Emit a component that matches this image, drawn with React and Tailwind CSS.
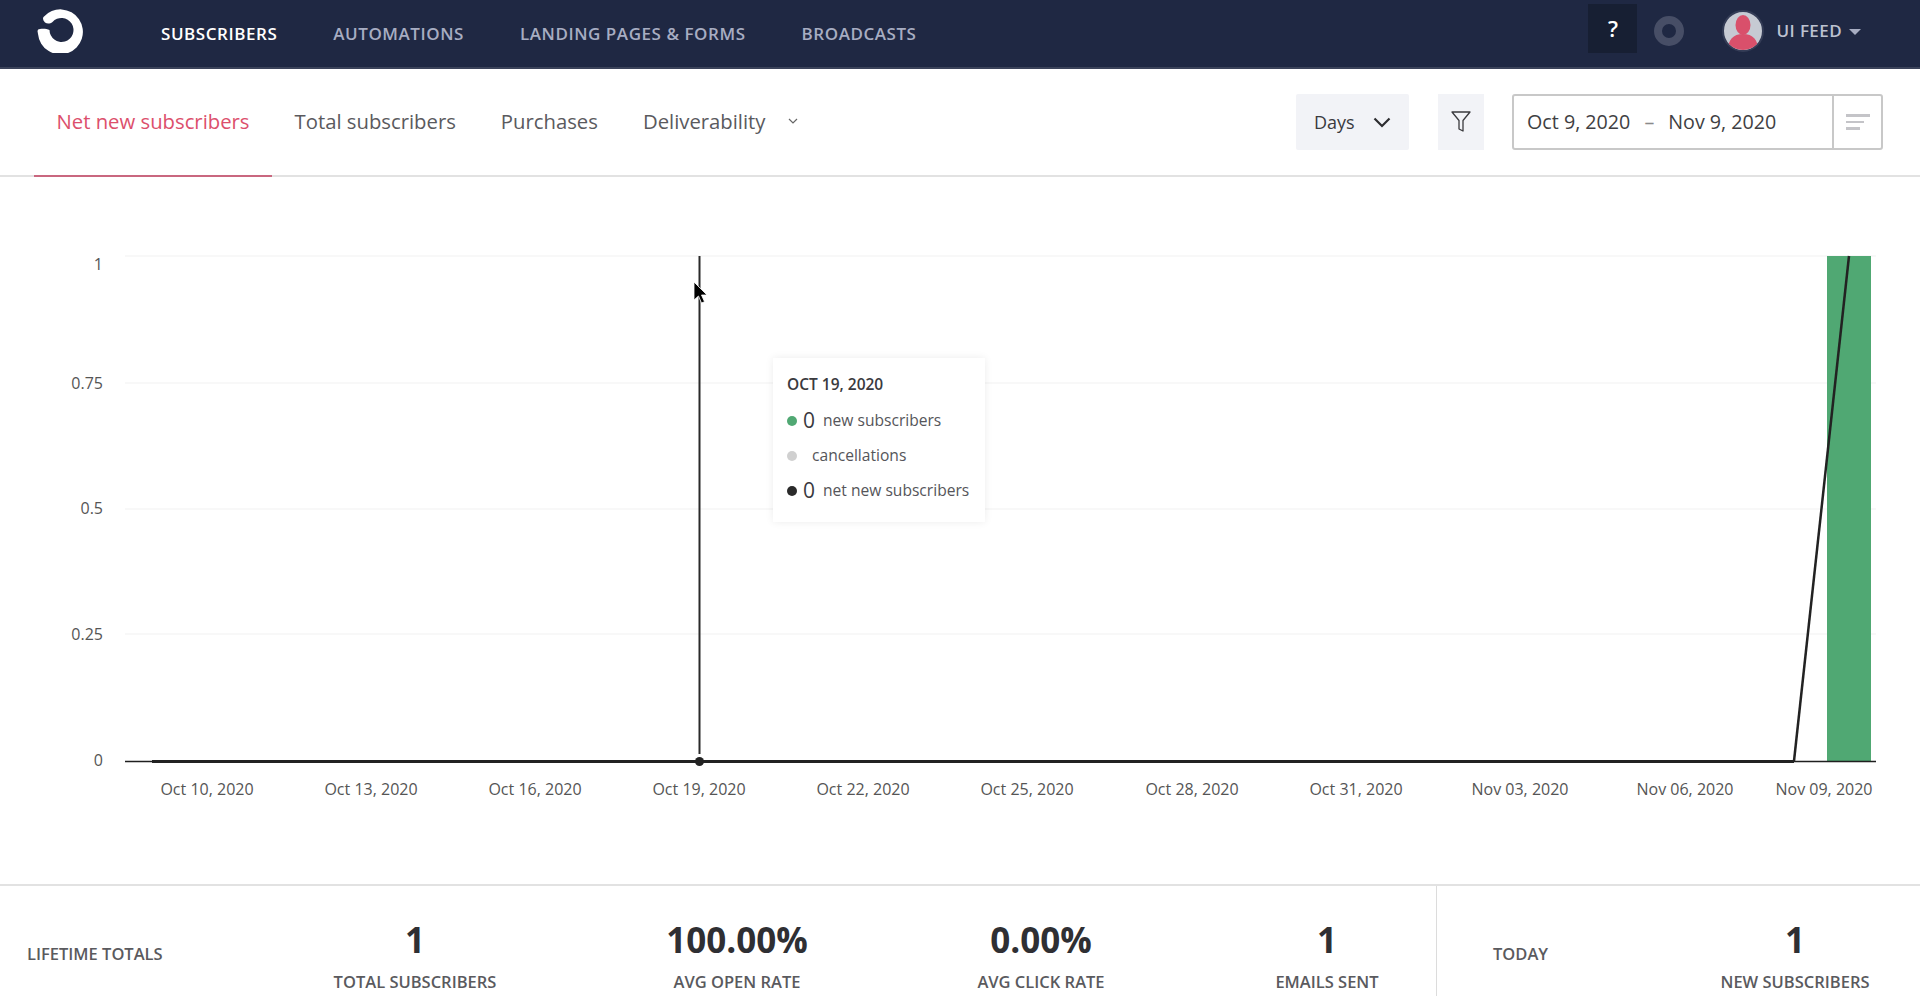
import React from "react";

const F = "font-['Open_Sans',sans-serif]";

function Logo() {
  return (
    <svg width="49" height="46" viewBox="0 0 49 46" className="block -mt-[7px]">
      <path d="M6.500 10A22.500 22.500 0 1 1 1 27L0.500 24Q0.500 22 3 22C7 21.500 10 22 12.500 23A12 12 0 1 0 15.500 15C13 17 10 17 8 15.500Q5 12.500 6.500 10Z" fill="#fff" />
    </svg>
  );
}

const navItems = ["SUBSCRIBERS", "AUTOMATIONS", "LANDING PAGES & FORMS", "BROADCASTS"];

function Nav() {
  return (
    <header className="h-[69px] shrink-0 bg-[#1f2843] border-b-2 border-[#3b435a] flex items-center pl-[37px] pr-[59px]">
      <Logo />
      <nav className="flex items-center gap-[56px] ml-[75px] text-[17px] font-semibold tracking-[0.55px]">
        {navItems.map((t, i) => (
          <span key={t} className={i === 0 ? "text-white" : "text-[#a7adc2]"}>{t}</span>
        ))}
      </nav>
      <div className="ml-auto flex items-center">
        <div className="w-[49px] h-[49px] -mt-[10px] bg-[#171f33] flex items-center justify-center text-white font-semibold text-[22px]">?</div>
        <div className="w-[30px] h-[30px] ml-[17px] -mt-[6px] rounded-full border-[8px] border-[#474e66]" />
        <div className="w-[42px] h-[42px] ml-[38px] -mt-[6px] rounded-full bg-[#c6cad3] border-2 border-[#343c56] overflow-hidden">
          <svg viewBox="0 0 38 38" width="38" height="38" className="block">
            <ellipse cx="19" cy="13" rx="7.500" ry="10" fill="#d9506b" />
            <path d="M4 38c0-10 5-16 15-16s15 6 15 16z" fill="#d9506b" />
          </svg>
        </div>
        <span className="ml-[12px] -mt-[6px] text-[#bcc1d0] font-semibold text-[17px] tracking-[0.4px]">UI FEED</span>
        <span className="ml-[7px] -mt-[4px] w-0 h-0 border-x-[6px] border-x-transparent border-t-[6px] border-t-[#a7adc2]" />
      </div>
    </header>
  );
}

const tabs = ["Net new subscribers", "Total subscribers", "Purchases", "Deliverability"];

function Tabs() {
  return (
    <div className="h-[108px] shrink-0 border-b-2 border-[#e2e2e2] flex items-stretch pl-[34px] pr-[37px]">
      {tabs.map((t, i) => (
        <div key={t} className={"flex items-center px-[22.5px] pb-[2px] -mb-[2px] text-[20.300px] " + (i === 0 ? "text-[#dc4f6c] border-b-2 border-[#c9677f]" : "text-[#5a5a5e] border-b-2 border-transparent")}>
          {t}
        </div>
      ))}
      <svg width="10" height="7" viewBox="0 0 10 7" fill="none" stroke="#666" strokeWidth="1.200" className="self-center -mt-[2px]"><path d="M1 1l4 4 4-4" /></svg>
      <div className="ml-auto flex items-center">
        <button className="w-[113px] h-[56px] bg-[#f2f3f7] rounded-[2px] flex items-center pl-[18px] text-[18px] text-[#3a3a3e]">
          Days
          <svg width="18" height="11" viewBox="0 0 18 11" fill="none" stroke="#2d2d30" strokeWidth="2.200" className="ml-[18px]"><path d="M1.500 1.500L9 9l7.500-7.500" /></svg>
        </button>
        <button className="w-[46px] h-[56px] ml-[29px] bg-[#f2f3f7] flex items-center justify-center">
          <svg width="20" height="22" viewBox="0 0 20 22" fill="none" stroke="#3a3a3e" strokeWidth="1.300"><path d="M1 1h18l-7 8.500V20l-4-2V9.500z" strokeLinejoin="round" /></svg>
        </button>
        <div className="w-[371px] h-[56px] ml-[28px] border-2 border-[#c8c8c8] rounded-[3px] flex items-center text-[19.700px] text-[#3f3f43]">
          <span className="ml-[13px]">Oct 9, 2020</span>
          <span className="ml-[14px] text-[#8a8a8a]">–</span>
          <span className="ml-[14px]">Nov 9, 2020</span>
          <div className="ml-auto w-[49px] h-full border-l-2 border-[#c8c8c8] flex flex-col justify-center gap-[4px] pl-[12px]">
            <span className="block w-[24px] h-[2.500px] bg-[#c4c4c8]" />
            <span className="block w-[18px] h-[2.500px] bg-[#c4c4c8]" />
            <span className="block w-[14px] h-[2.500px] bg-[#c4c4c8]" />
          </div>
        </div>
      </div>
    </div>
  );
}

const yTicks = [["1", 256, 265], ["0.75", 383, 384], ["0.5", 509, 509], ["0.25", 634, 635], ["0", 761, 761]];
const xTicks = [
  ["Oct 10, 2020", 207], ["Oct 13, 2020", 371], ["Oct 16, 2020", 535], ["Oct 19, 2020", 699],
  ["Oct 22, 2020", 863], ["Oct 25, 2020", 1027], ["Oct 28, 2020", 1192], ["Oct 31, 2020", 1356],
  ["Nov 03, 2020", 1520], ["Nov 06, 2020", 1685], ["Nov 09, 2020", 1824],
];
const T = 177;

function Chart() {
  return (
    <svg width="1920" height="707" viewBox={`0 ${T} 1920 707`} className="block absolute inset-0" style={{ fontFamily: "'Open Sans', sans-serif" }}>
      {yTicks.slice(0, 4).map(([l, y]) => (
        <line key={l} x1="125" x2="1876" y1={y} y2={y} stroke="#f6f6f6" strokeWidth="1.500" />
      ))}
      {yTicks.map(([l, y, ly]) => (
        <text key={l} x="103" y={ly + 5} textAnchor="end" fontSize="16" fill="#555">{l}</text>
      ))}
      {xTicks.map(([l, x]) => (
        <text key={l} x={x} y={795} textAnchor="middle" fontSize="16" fill="#555">{l}</text>
      ))}
      <rect x="1827" y="256" width="44" height="505" fill="#50a873" />
      <line x1="125" x2="1876" y1="761.500" y2="761.500" stroke="#1f1f1f" strokeWidth="1.500" />
      <line x1="152" x2="1794" y1="761.500" y2="761.500" stroke="#222" strokeWidth="3" />
      <line x1="1794" y1="761" x2="1849" y2="256" stroke="#222" strokeWidth="2.500" />
      <line x1="699.500" y1="256" x2="699.500" y2="754" stroke="#2a2a2a" strokeWidth="2" />
      <circle cx="699.500" cy="761.500" r="4.500" fill="#222" />
    </svg>
  );
}

function TipRow({ color, value, label }) {
  return (
    <div className="flex items-center h-[35px]">
      <span className="w-[10px] h-[10px] rounded-full" style={{ backgroundColor: color }} />
      {value ? <span className="ml-[6px] w-[20px] text-[21px] text-[#3a3a3e]">{value}</span> : <span className="w-[15px]" />}
      <span className="text-[15.600px] text-[#55555a]">{label}</span>
    </div>
  );
}

function Stat({ value, label, className }) {
  return (
    <div className={"flex flex-col items-center pt-[31px] " + className}>
      <div className="text-[35px] leading-[46px] font-bold text-[#2f2f33]">{value}</div>
      <div className="mt-[9px] text-[16.500px] leading-[20px] font-semibold text-[#5a5a5e]">{label}</div>
    </div>
  );
}

function Totals() {
  return (
    <div className="flex-1 border-t-2 border-[#e2e2e2] flex overflow-hidden">
      <div className="w-[1437px] shrink-0 border-r border-[#dcdcdc] flex">
        <div className="w-[254px] pl-[27px] pt-[58px] text-[16.500px] leading-[20px] font-semibold text-[#5a5a5e]">LIFETIME TOTALS</div>
        <Stat value="1" label="TOTAL SUBSCRIBERS" className="w-[322px]" />
        <Stat value="100.00%" label="AVG OPEN RATE" className="w-[322px]" />
        <Stat value="0.00%" label="AVG CLICK RATE" className="w-[286px]" />
        <Stat value="1" label="EMAILS SENT" className="w-[252px] pl-[34px]" />
      </div>
      <div className="flex-1 flex">
        <div className="w-[233px] pl-[56px] pt-[58px] text-[16.500px] leading-[20px] font-semibold text-[#5a5a5e]">TODAY</div>
        <Stat value="1" label="NEW SUBSCRIBERS" className="w-[250px]" />
      </div>
    </div>
  );
}

export default function App() {
  return (
    <div className={"w-[1920px] h-[996px] overflow-hidden bg-white flex flex-col " + F}>
      <Nav />
      <Tabs />
      <main className="h-[707px] shrink-0 relative">
        <Chart />
        <div className="absolute left-[773px] top-[181px] w-[212px] h-[164px] bg-white shadow-[0_0_8px_rgba(0,0,0,0.08)] pt-[13px] pl-[14px]">
          <div className="text-[15.500px] leading-[26px] font-semibold text-[#3a3a3e]">OCT 19, 2020</div>
          <div className="mt-[6px]">
            <TipRow color="#50a873" value="0" label="new subscribers" />
            <TipRow color="#d0d0d0" label="cancellations" />
            <TipRow color="#2a2a2a" value="0" label="net new subscribers" />
          </div>
        </div>
        <svg width="14" height="24" viewBox="0 0 14 24" className="absolute left-[693px] top-[104px]">
          <path d="M1 1v18l4.500-4 3 7 3-1.300-3-6.700H14z" fill="#000" stroke="#fff" strokeWidth="0.800" />
        </svg>
      </main>
      <Totals />
    </div>
  );
}
